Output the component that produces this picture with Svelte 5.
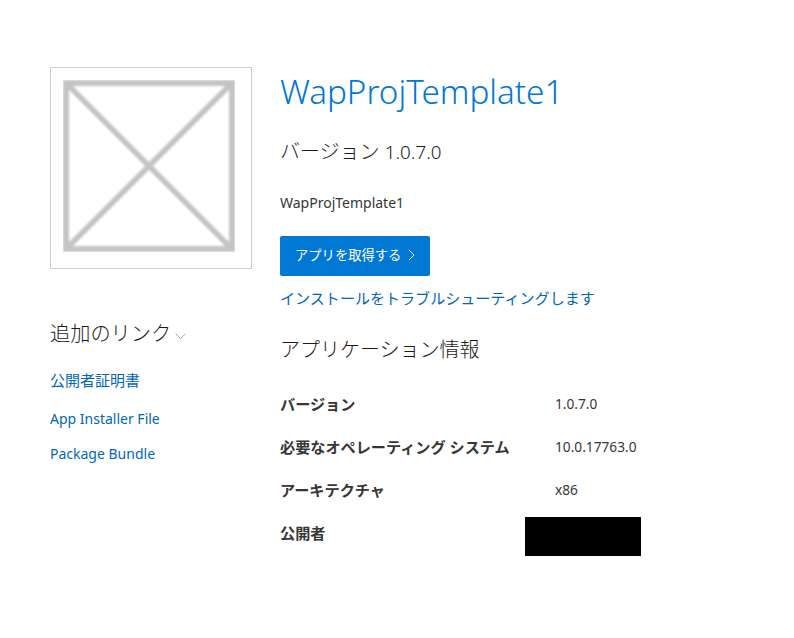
<script>
  const rows = [
    { label: 'バージョン', value: '1.0.7.0' },
    { label: '必要なオペレーティング システム', value: '10.0.17763.0' },
    { label: 'アーキテクチャ', value: 'x86' },
    { label: '公開者', value: '' }
  ];
  const links = ['App Installer File', 'Package Bundle'];
</script>

<div class="page">
  <aside class="side">
    <div class="logo">
      <svg width="172" height="172" viewBox="0 0 172 172">
        <g class="blur" fill="none" stroke="#c4c4c4">
          <rect x="3" y="3" width="166" height="166" stroke-width="6" />
          <path d="M3 3L169 169M169 3L3 169" stroke-width="5.5" />
        </g>
      </svg>
    </div>
    <h2 class="more">
      追加のリンク
      <svg class="chev" width="11" height="7" viewBox="0 0 11 7">
        <path d="M.7 .8L5.5 5.6L10.3 .8" fill="none" stroke="#a6a6a6" />
      </svg>
    </h2>
    <a class="cert" href="#cert">公開者証明書</a>
    {#each links as link}
      <a class="side-link" href="#file">{link}</a>
    {/each}
  </aside>

  <main class="content">
    <h1>WapProjTemplate1</h1>
    <div class="version">バージョン <span class="num">1.0.7.0</span></div>
    <p class="name">WapProjTemplate1</p>
    <a class="get" href="#get">
      アプリを取得する
      <svg width="7" height="12" viewBox="0 0 7 12">
        <path d="M1 1L6 6L1 11" fill="none" stroke="#fff" />
      </svg>
    </a>
    <a class="trouble" href="#help">インストールをトラブルシューティングします</a>
    <h2 class="info">アプリケーション情報</h2>
    <div class="table">
      {#each rows as row}
        <div class="row">
          <span class="label">{row.label}</span>
          <span class="value">{row.value}</span>
        </div>
      {/each}
      <div class="redact"></div>
    </div>
  </main>
</div>

<style>
  :global(body) {
    background: #fff;
  }

  .page {
    display: flex;
    width: 794px;
    height: 638px;
    overflow: hidden;
    box-sizing: border-box;
    padding: 67px 0 0 50px;
    font-family: "Noto Sans", "Noto Sans CJK JP", sans-serif;
    color: #363636;
  }

  .side {
    width: 202px;
    margin-right: 28px;
    display: flex;
    flex-direction: column;
    align-items: flex-start;
  }

  .logo {
    width: 202px;
    height: 202px;
    box-sizing: border-box;
    border: 1px solid #cfcfcf;
    padding: 12px;
    flex: none;
  }

  .logo svg {
    display: block;
  }

  .blur {
    filter: blur(1.2px);
  }

  .more {
    margin: 50px 0 0;
    font-size: 20.2px;
    line-height: 28px;
    font-weight: 300;
    color: #1a1a1a;
    display: flex;
    align-items: center;
    gap: 4px;
  }

  .chev {
    margin-top: 6px;
  }

  a {
    color: #0067b8;
    text-decoration: none;
  }

  .cert {
    margin-top: 23px;
    font-size: 15px;
    line-height: 20px;
  }

  .side-link {
    margin-top: 15px;
    font-size: 14px;
    line-height: 20px;
  }

  .cert + .side-link {
    margin-top: 19px;
  }

  .content {
    flex: 1;
    display: flex;
    flex-direction: column;
    align-items: flex-start;
  }

  h1 {
    margin: 0;
    font-size: 33.2px;
    line-height: 50px;
    font-weight: 300;
    color: #0078d4;
  }

  .version {
    margin-top: 21px;
    font-size: 20px;
    line-height: 28px;
    font-weight: 300;
    color: #1a1a1a;
  }

  .num {
    font-size: 18.8px;
  }

  .name {
    margin: 27px 0 0;
    font-size: 14px;
    line-height: 20px;
  }

  .get {
    margin-top: 23px;
    height: 40px;
    width: 150px;
    box-sizing: border-box;
    padding: 0 0 3px 15px;
    display: flex;
    align-items: center;
    gap: 7px;
    background: #0078d4;
    border-radius: 2px;
    color: #fff;
    font-size: 13.3px;
  }

  .trouble {
    margin-top: 11px;
    font-size: 15.05px;
    line-height: 22px;
  }

  .info {
    margin: 27px 0 0;
    font-size: 20px;
    line-height: 28px;
    font-weight: 300;
    color: #1a1a1a;
  }

  .table {
    position: relative;
    margin-top: 18px;
    width: 400px;
  }

  .row {
    display: flex;
    height: 43px;
    align-items: center;
    font-size: 13.7px;
  }

  .label {
    width: 275px;
    margin-top: -2px;
    font-size: 15.15px;
    font-weight: 700;
  }

  .redact {
    position: absolute;
    left: 245px;
    top: 135px;
    width: 116px;
    height: 39px;
    background: #000;
  }
</style>
